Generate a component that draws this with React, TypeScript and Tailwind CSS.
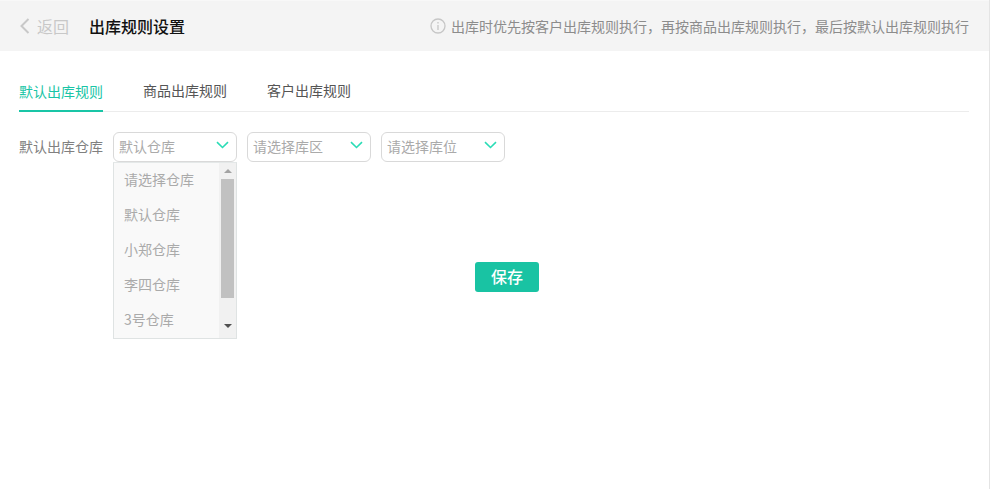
import React from "react";

const F = { fontFamily: '"Noto Sans CJK SC", "Noto Sans", sans-serif' };

function Chevron() {
  return (
    <svg width="13" height="8" viewBox="0 0 13 8" fill="none" stroke="#2adcb6" strokeWidth="1.6" className="absolute right-[8px] top-[9px]">
      <path d="M1 1.2 L6.5 6.5 L12 1.2" />
    </svg>
  );
}

function Select({ label, children }: { label: string; children?: React.ReactNode }) {
  return (
    <div className="relative w-[124px] h-[30px]">
      <div className="h-full border border-[#d9d9d9] rounded-[6px] pl-[5px] text-[14px] leading-[26px] text-[#aaaaaa] bg-white">{label}</div>
      <Chevron />
      {children}
    </div>
  );
}

const options = ["请选择仓库", "默认仓库", "小郑仓库", "李四仓库", "3号仓库"];

export default function App() {
  return (
    <div style={F} className="w-[990px] h-[489px] bg-white overflow-hidden border-r border-[#e4e4e4] box-border">
      <header className="h-[51px] bg-[#f4f4f4] flex items-center pl-[19px] pr-[20px] border-t border-[#f8f8f8]">
        <svg width="12" height="16" viewBox="0 0 12 16" fill="none" stroke="#c8c8c8" strokeWidth="2" className="mr-[6px]">
          <path d="M9.5 1 L2.5 8 L9.5 15" />
        </svg>
        <span className="text-[16px] text-[#c8c8c8]">返回</span>
        <span className="text-[16px] text-[#111111] ml-[20px] font-medium">出库规则设置</span>
        <div className="ml-auto flex items-center text-[14px] text-[#8c8c8c]">
          <svg width="16" height="16" viewBox="0 0 16 16" fill="none" stroke="#c6c6c6" strokeWidth="1.3" className="mr-[5px]">
            <circle cx="8" cy="8" r="7" />
            <path d="M8 7 V12 M8 4 V5.5" />
          </svg>
          <span>出库时优先按客户出库规则执行，再按商品出库规则执行，最后按默认出库规则执行</span>
        </div>
      </header>

      <main className="pl-[19px] pr-[20px]">
        <nav className="flex gap-[40px] h-[61px] items-end border-b border-[#ececec] text-[14px] text-[#555555]">
          <div className="h-[41px] leading-[40px] border-b-2 border-[#19c5a6] text-[#19c5a6] -mb-px">默认出库规则</div>
          <div className="h-[41px] leading-[40px]">商品出库规则</div>
          <div className="h-[41px] leading-[40px]">客户出库规则</div>
        </nav>

        <div className="flex items-center gap-[10px] mt-[20px] text-[14px]">
          <span className="text-[#808080] pb-[2px]">默认出库仓库</span>
          <Select label="默认仓库">
            <div className="absolute left-0 top-[30px] w-[124px] h-[177px] border border-[#dfe3e3] border-t-[#e4e8e8] bg-[#f9f9f9] flex">
              <ul className="flex-1 pl-[10px] text-[14px] text-[#aaaaaa]">
                {options.map((o) => (
                  <li key={o} className="h-[35px] leading-[33px]">{o}</li>
                ))}
              </ul>
              <div className="w-[17px] h-full bg-[#f1f1f1] flex flex-col items-center pt-[6px]">
                <div className="w-0 h-0 border-x-[4px] border-x-transparent border-b-[4px] border-b-[#a3a3a3]" />
                <div className="w-[13px] h-[119px] bg-[#c1c1c1] mt-[6px]" />
                <div className="w-0 h-0 border-x-[4px] border-x-transparent border-t-[4px] border-t-[#505050] mt-[26px]" />
              </div>
            </div>
          </Select>
          <Select label="请选择库区" />
          <Select label="请选择库位" />
        </div>

        <div className="mt-[100px] pl-[456px]">
          <button className="w-[64px] h-[30px] rounded-[3px] bg-[#19c3a3] text-white text-[16px] font-medium leading-[28px] pb-[2px]">保存</button>
        </div>
      </main>
    </div>
  );
}
